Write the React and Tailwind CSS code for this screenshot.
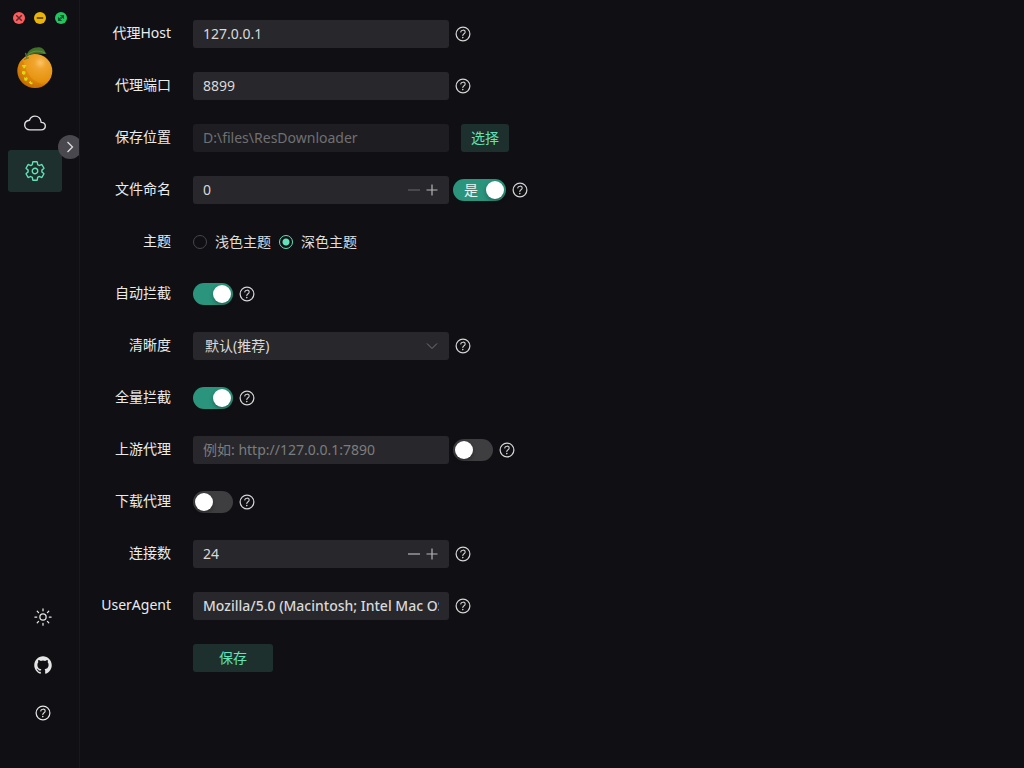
import React, { useState } from "react";
import {
  IoCloudOutline,
  IoSettingsOutline,
  IoSunnyOutline,
  IoLogoGithub,
  IoHelpCircleOutline,
} from "react-icons/io5";

const USER_AGENT =
  "Mozilla/5.0 (Macintosh; Intel Mac OS X 10_15_7) AppleWebKit/537.36 (KHTML, like Gecko) Chrome/119.0.0.0 Safari/537.36";

const fieldClass =
  "h-7 w-64 rounded-[3px] bg-[#28282c] text-sm text-[#d9d9da] outline-none";

function Logo() {
  return (
    <svg viewBox="0 0 40 44" className="h-11 w-10" aria-hidden="true">
      <defs>
        <radialGradient id="orange" cx="66%" cy="26%" r="80%">
          <stop offset="0" stopColor="#fbc468" />
          <stop offset="0.22" stopColor="#f0a52e" />
          <stop offset="0.7" stopColor="#e5920c" />
          <stop offset="1" stopColor="#b96404" />
        </radialGradient>
      </defs>
      <ellipse cx="19.8" cy="26" rx="17.5" ry="17" fill="url(#orange)" />
      <path d="M4 18C1 30 8 41 20 43C25 43 28 42 30 40C19 38 11 30 8 15Z" fill="#cf6f04" opacity="0.4" />
      <path
        d="M11.500 10.500C13 5 18 2 24 2.200C28.500 2.500 29.500 6 31.500 8.800C26 9.500 20 8 15 9.800C13.500 10.300 12.500 11 11 13Z"
        fill="#41702a"
      />
      <path d="M13 9.500C18 5.500 24 5 30 8" stroke="#6f9a48" strokeWidth="0.8" fill="none" />
      <path d="M10.500 8L12 13M9 14.500L14 12.800" stroke="#6b7a2c" strokeWidth="1.200" fill="none" />
      <path
        d="M7 20h4.200v1.500h-1.200v1.800h-1.800v-1.800h-1.200zM7 26.500l1.700-.6 1.800.6v2.200l-1.700 1.300-1.800-1.300zM9 32l1.400 1 1.600-1 .8 2-1.500 2-2-.8zM13.800 37.500l1.700-1.700.8 1.500 1.600.5-.8 1.800-1.800-.5z"
        fill="#d0e00c"
      />
    </svg>
  );
}

function WindowButtons() {
  return (
    <div className="flex gap-[9px] pl-[13px]">
      <button aria-label="关闭" className="size-3 rounded-full bg-[#ff5c5c]">
        <svg viewBox="0 0 12 12" fill="none" stroke="#5a2a2f" strokeWidth="1.500">
          <path d="M3.200 3.200l5.600 5.600M8.800 3.200l-5.600 5.600" />
        </svg>
      </button>
      <button aria-label="最小化" className="size-3 rounded-full bg-[#eab308]">
        <svg viewBox="0 0 12 12" fill="none" stroke="#644c0b" strokeWidth="1.800">
          <path d="M2.800 6h6.400" />
        </svg>
      </button>
      <button aria-label="最大化" className="size-3 rounded-full bg-[#22c55e]">
        <svg viewBox="0 0 12 12" fill="#12532d">
          <path d="M4.800 3h4.200v4.200l-1.400-1.400-1.200 1.200-.8-.8 1.300-1.200zM3 4.800l1.400 1.400 1.200-1.200.8.800-1.200 1.200 2 2h-4.200z" />
        </svg>
      </button>
    </div>
  );
}

function Sidebar() {
  return (
    <aside className="relative flex w-20 shrink-0 flex-col overflow-hidden border-r border-[#111a26] pt-3">
      <WindowButtons />
      <div className="mt-[21px] pl-[15px]">
        <Logo />
      </div>
      <nav className="mt-[13px] flex flex-col gap-[6px] px-2">
        <a
          href="#resources"
          aria-label="资源"
          className="flex h-[42px] w-[54px] items-center justify-center text-[#e2e2e3]"
        >
          <IoCloudOutline className="size-[22px]" />
        </a>
        <a
          href="#settings"
          aria-label="设置"
          className="flex h-[42px] w-[54px] items-center justify-center rounded-[3px] bg-[#1e302e] text-[#63e2b7]"
        >
          <IoSettingsOutline className="size-[22px]" />
        </a>
      </nav>
      <button
        aria-label="展开菜单"
        className="absolute top-[135px] -right-[3px] flex size-6 items-center justify-center rounded-full bg-[#48484e] text-[#dedede]"
      >
        <svg viewBox="0 0 24 24" className="size-6" fill="none" stroke="currentColor" strokeWidth="1.300">
          <path d="M9.500 7l5 5-5 5" />
        </svg>
      </button>
      <div className="mt-auto flex flex-col items-center gap-7 pb-[45px] pl-[7px] text-[#e5e5e6]">
        <button aria-label="切换主题">
          <IoSunnyOutline className="size-5" />
        </button>
        <a href="#github" aria-label="GitHub">
          <IoLogoGithub className="size-5" />
        </a>
        <button aria-label="帮助">
          <IoHelpCircleOutline className="size-5" />
        </button>
      </div>
    </aside>
  );
}

function Help() {
  return (
    <button type="button" aria-label="说明" className="text-[#d4d4d5]">
      <IoHelpCircleOutline className="size-5" />
    </button>
  );
}

function Row({ label, htmlFor, labelId, children }) {
  return (
    <div className="flex h-7 items-center gap-[22px]">
      <label
        id={labelId}
        htmlFor={htmlFor}
        className="w-[75px] shrink-0 pb-0.5 text-right text-sm whitespace-nowrap text-[#ebebec]"
      >
        {label}
      </label>
      <div className="flex items-center gap-1">{children}</div>
    </div>
  );
}

function Switch({ id, label, checked, onChange, text }) {
  return (
    <label className="flex h-[22px] min-w-10 cursor-pointer items-center rounded-full bg-[#3e3e41] p-0.5 has-checked:justify-end has-checked:bg-[#2a947d]">
      <input
        id={id}
        type="checkbox"
        role="switch"
        aria-label={label}
        className="sr-only"
        checked={checked}
        onChange={(e) => onChange(e.target.checked)}
      />
      {text && checked && (
        <span className="pr-2 pl-[9px] text-sm leading-[18px] text-[#e8f3f0]">{text}</span>
      )}
      <span className="size-[18px] rounded-full bg-white shadow-[0_2px_4px_rgba(0,0,0,0.3)]" />
    </label>
  );
}

function NumberField({ id, value, onChange, min = 0 }) {
  return (
    <div className={`${fieldClass} flex items-center pr-2`}>
      <input
        id={id}
        inputMode="numeric"
        className="h-7 min-w-0 flex-1 bg-transparent pb-0.5 pl-[10px] outline-none"
        value={value}
        onChange={(e) => onChange(Number(e.target.value) || 0)}
      />
      <button
        type="button"
        aria-label="减少"
        disabled={value <= min}
        className="size-[18px] text-[#b5b5b7] disabled:text-[#5f5f62]"
        onClick={() => onChange(value - 1)}
      >
        <svg viewBox="0 0 18 18" stroke="currentColor" strokeWidth="1.200">
          <path d="M3 9h12" />
        </svg>
      </button>
      <button
        type="button"
        aria-label="增加"
        className="size-[18px] text-[#b5b5b7]"
        onClick={() => onChange(value + 1)}
      >
        <svg viewBox="0 0 18 18" stroke="currentColor" strokeWidth="1.200">
          <path d="M3.500 9h11M9 3.500v11" />
        </svg>
      </button>
    </div>
  );
}

function ThemeRadio({ value, theme, setTheme, children }) {
  return (
    <label className="flex items-center gap-2 text-sm text-[#dededf]">
      <input
        type="radio"
        name="theme"
        value={value}
        checked={theme === value}
        onChange={() => setTheme(value)}
        className="size-[14px] appearance-none rounded-full border border-[#47474b] checked:border-[#63e2b7] checked:bg-[radial-gradient(circle,#63e2b7_3px,transparent_4px)]"
      />
      {children}
    </label>
  );
}

export default function App() {
  const [form, setForm] = useState({
    host: "127.0.0.1",
    port: "8899",
    fileLen: 0,
    fileTime: true,
    theme: "dark",
    autoProxy: true,
    quality: "0",
    wxAction: true,
    upstream: "",
    openProxy: false,
    downloadProxy: false,
    taskNumber: 24,
    userAgent: USER_AGENT,
  });
  const set = (key) => (value) => setForm((prev) => ({ ...prev, [key]: value }));

  return (
    <div className="flex min-h-screen bg-[#101014] font-['Noto_Sans','Noto_Sans_CJK_SC',sans-serif]">
      <Sidebar />
      <main className="min-w-0 flex-1 px-4 py-5">
        <form className="flex flex-col gap-6" onSubmit={(e) => e.preventDefault()}>
          <Row label="代理Host" htmlFor="host">
            <input
              id="host"
              className={`${fieldClass} px-[10px] pb-0.5`}
              value={form.host}
              onChange={(e) => set("host")(e.target.value)}
            />
            <Help />
          </Row>
          <Row label="代理端口" htmlFor="port">
            <input
              id="port"
              className={`${fieldClass} px-[10px] pb-0.5`}
              value={form.port}
              onChange={(e) => set("port")(e.target.value)}
            />
            <Help />
          </Row>
          <Row label="保存位置" htmlFor="dir">
            <input
              id="dir"
              disabled
              className="h-7 w-64 rounded-[3px] bg-[#1e1e22] px-[10px] pb-0.5 text-sm text-[#707072]"
              value="D:\files\ResDownloader"
            />
            <button
              type="button"
              className="ml-2 h-7 rounded-[3px] bg-[#1e302e] px-[10px] text-sm text-[#63e2b7]"
            >
              选择
            </button>
          </Row>
          <Row label="文件命名" htmlFor="fileLen">
            <NumberField id="fileLen" value={form.fileLen} onChange={set("fileLen")} />
            <Switch label="添加时间" text="是" checked={form.fileTime} onChange={set("fileTime")} />
            <Help />
          </Row>
          <Row label="主题" labelId="themeLabel">
            <div role="radiogroup" aria-labelledby="themeLabel" className="flex gap-2">
              <ThemeRadio value="light" theme={form.theme} setTheme={set("theme")}>
                浅色主题
              </ThemeRadio>
              <ThemeRadio value="dark" theme={form.theme} setTheme={set("theme")}>
                深色主题
              </ThemeRadio>
            </div>
          </Row>
          <Row label="自动拦截" htmlFor="autoProxy">
            <Switch id="autoProxy" checked={form.autoProxy} onChange={set("autoProxy")} />
            <Help />
          </Row>
          <Row label="清晰度" htmlFor="quality">
            <div className="relative">
              <select
                id="quality"
                className={`${fieldClass} block appearance-none pr-8 pl-3`}
                value={form.quality}
                onChange={(e) => set("quality")(e.target.value)}
              >
                <option value="0">默认(推荐)</option>
                <option value="1">超清</option>
                <option value="2">高画质</option>
              </select>
              <svg
                viewBox="0 0 16 16"
                className="pointer-events-none absolute top-1.5 right-[9px] size-4"
                fill="none"
                stroke="#77777a"
              >
                <path d="M3 5.500l5 5 5-5" />
              </svg>
            </div>
            <Help />
          </Row>
          <Row label="全量拦截" htmlFor="wxAction">
            <Switch id="wxAction" checked={form.wxAction} onChange={set("wxAction")} />
            <Help />
          </Row>
          <Row label="上游代理" htmlFor="upstream">
            <input
              id="upstream"
              placeholder="例如: http://127.0.0.1:7890"
              className={`${fieldClass} px-[10px] pb-0.5 placeholder:text-[#7c7c7e]`}
              value={form.upstream}
              onChange={(e) => set("upstream")(e.target.value)}
            />
            <Switch label="启用上游代理" checked={form.openProxy} onChange={set("openProxy")} />
            <Help />
          </Row>
          <Row label="下载代理" htmlFor="downloadProxy">
            <Switch
              id="downloadProxy"
              checked={form.downloadProxy}
              onChange={set("downloadProxy")}
            />
            <Help />
          </Row>
          <Row label="连接数" htmlFor="taskNumber">
            <NumberField id="taskNumber" value={form.taskNumber} onChange={set("taskNumber")} min={1} />
            <Help />
          </Row>
          <Row label="UserAgent" htmlFor="userAgent">
            <input
              id="userAgent"
              className={`${fieldClass} px-[10px] pb-0.5 font-medium`}
              value={form.userAgent}
              onChange={(e) => set("userAgent")(e.target.value)}
            />
            <Help />
          </Row>
          <button
            type="submit"
            className="ml-[97px] h-7 w-20 rounded-[3px] bg-[#1e302e] text-sm text-[#63e2b7]"
          >
            保存
          </button>
        </form>
      </main>
    </div>
  );
}
